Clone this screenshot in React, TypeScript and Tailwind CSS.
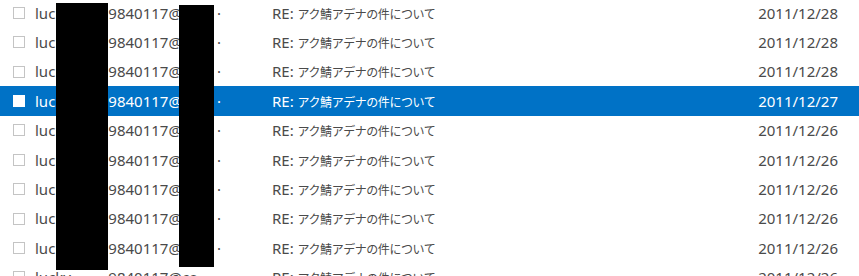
import React from 'react';

type Mail = {
  date: string;
  selected?: boolean;
};

const mails: Mail[] = [
  { date: '2011/12/28' },
  { date: '2011/12/28' },
  { date: '2011/12/28' },
  { date: '2011/12/27', selected: true },
  { date: '2011/12/26' },
  { date: '2011/12/26' },
  { date: '2011/12/26' },
  { date: '2011/12/26' },
  { date: '2011/12/26' },
  { date: '2011/12/26' },
];

function MailRow({ mail }: { mail: Mail }) {
  const sel = mail.selected;
  return (
    <div
      className={`flex h-[29.4px] items-center whitespace-nowrap ${
        sel ? 'bg-[#0072c6] text-white' : 'bg-white text-[#4a4a4a]'
      }`}
    >
      <span
        className={`ml-[13px] h-[12px] w-[12px] shrink-0 border ${
          sel ? 'border-white bg-white' : 'border-[#c4c4c4] bg-white'
        }`}
      />
      <div className="ml-[10px] w-[237px] shrink-0 overflow-hidden">
        luc
        <span className="inline-block w-[53px] align-bottom">ky_</span>
        9840117@
        <span className="inline-block w-[35px] align-bottom">co</span>·
      </div>
      <div className="flex-1">
        RE:{' '}
        <span className="text-[12px] tracking-[-0.45px] [font-family:'Noto_Sans_CJK_JP',sans-serif]">
          アク鯖アデナの件について
        </span>
      </div>
      <div className="pr-[21px]">{mail.date}</div>
    </div>
  );
}

export default function App() {
  return (
    <div className="relative h-[276px] w-[859px] overflow-hidden bg-white text-[15px] [font-family:'Noto_Sans','Noto_Sans_CJK_JP',sans-serif]">
      <div className="mt-[-1.9px]">
        {mails.map((m, i) => (
          <MailRow key={i} mail={m} />
        ))}
      </div>

      {/* redaction bars */}
      <div className="absolute left-[56px] top-[3px] h-[267px] w-[52px] bg-black" />
      <div className="absolute left-[179px] top-[5px] h-[262px] w-[35px] bg-black" />
    </div>
  );
}
